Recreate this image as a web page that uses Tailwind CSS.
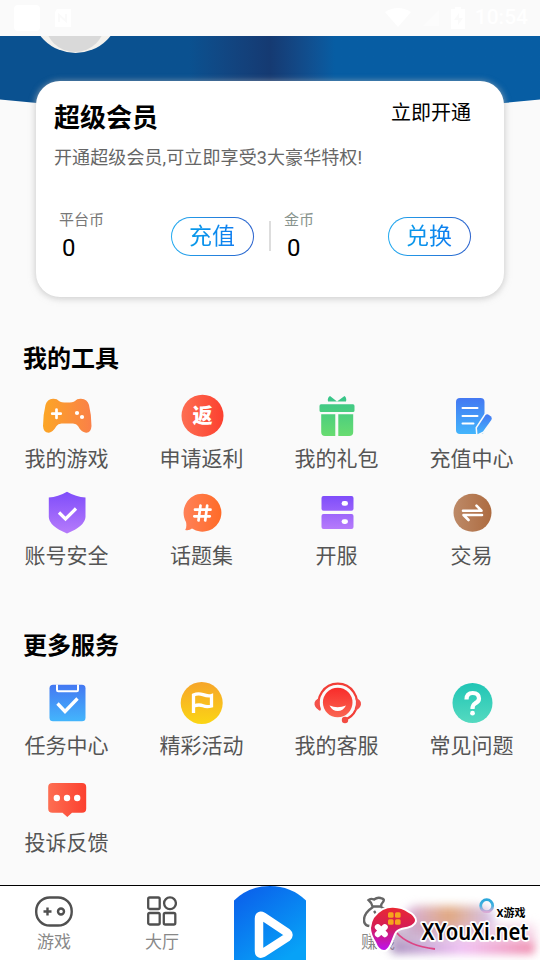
<!DOCTYPE html>
<html lang="zh-CN">
<head>
<meta charset="utf-8">
<title>我的</title>
<script src="https://cdn.jsdelivr.net/npm/@tailwindcss/browser@4"></script>
</head>
<body class="bg-[#fafafa] font-[Roboto,'Noto_Sans_CJK_SC',sans-serif]">
<svg class="absolute size-0" aria-hidden="true">
  <defs>
    <linearGradient id="orange"><stop stop-color="#fca625"/><stop offset="1" stop-color="#fa8048"/></linearGradient>
    <linearGradient id="red"><stop stop-color="#fd6e52"/><stop offset="1" stop-color="#fc402f"/></linearGradient>
    <linearGradient id="green" x2="0" y2="1"><stop stop-color="#36c48a"/><stop offset="1" stop-color="#68dc70"/></linearGradient>
    <linearGradient id="blue" x2="0" y2="1"><stop stop-color="#4478f2"/><stop offset="1" stop-color="#43b5fc"/></linearGradient>
    <linearGradient id="purple" x2="0" y2="1"><stop stop-color="#7f4dfa"/><stop offset="1" stop-color="#b67bfb"/></linearGradient>
    <linearGradient id="coral"><stop stop-color="#ff8158"/><stop offset="1" stop-color="#ff6b28"/></linearGradient>
    <linearGradient id="brown"><stop stop-color="#bd8a68"/><stop offset="1" stop-color="#ad6b40"/></linearGradient>
    <linearGradient id="gold" x2="0" y2="1"><stop stop-color="#f6a52a"/><stop offset="1" stop-color="#fbd514"/></linearGradient>
    <linearGradient id="teal" x2="0" y2="1"><stop stop-color="#20c5b5"/><stop offset="1" stop-color="#55dac0"/></linearGradient>
    <linearGradient id="face" x2="0" y2="1"><stop stop-color="#f82c2a"/><stop offset="1" stop-color="#fa6552"/></linearGradient>
    <linearGradient id="play" x2=".7" y2="1"><stop stop-color="#0b5bea"/><stop offset="1" stop-color="#07a2f7"/></linearGradient>
    <linearGradient id="pad" x2="0" y2="1"><stop stop-color="#e92833"/><stop offset=".45" stop-color="#d51d55"/><stop offset="1" stop-color="#bd13ee"/></linearGradient>
    <linearGradient id="ring" x2="0" y2="1"><stop stop-color="#2ba6da"/><stop offset=".5" stop-color="#45b2e0"/><stop offset="1" stop-color="#d9a9d5"/></linearGradient>
  </defs>
</svg>
<div class="relative flex h-[960px] w-[540px] flex-col overflow-hidden">
  <div class="relative z-10 flex h-9 shrink-0 items-center bg-[#fafafa] pl-3.5 pr-3 text-white">
    <div class="size-[26px] rounded-sm bg-white"></div>
    <svg class="ml-3.5" width="18" height="20" viewBox="0 0 18 20"><path d="M3 1h14v18H1V4z" fill="#fff"/><path d="M5 14V7l7 6V6" fill="none" stroke="#fafafa" stroke-width="2"/></svg>
    <svg class="ml-auto" width="26" height="20" viewBox="0 0 26 20"><path d="M0 4Q13-4 26 4L13 19z" fill="#fff"/></svg>
    <svg class="ml-2.5" width="20" height="20" viewBox="0 0 20 20"><path d="M18 2v16H2z" fill="#fcfcfc"/></svg>
    <svg class="ml-2.5" width="14" height="22" viewBox="0 0 14 22"><path d="M4 0h6v2h4v20H0V2h4z" fill="#fff"/><path d="M8 6l-5 7h4v5l5-7H8z" fill="#fafafa"/></svg>
    <span class="ml-2.5 text-[21px] font-medium">10:54</span>
  </div>

  <div class="absolute left-0 top-9 h-[70px] w-full overflow-hidden">
    <div class="h-full bg-linear-to-r from-[#0a5190] from-35% via-[#153a72] via-50% to-[#075da3] to-62% [clip-path:path('M0_0H540V63.5Q270_91_0_63.5Z')]"></div>
    <div class="absolute -top-[72px] left-[30.5px] size-[89px] rounded-full bg-[#f3f1ed]"></div>
    <div class="absolute -top-[44px] left-[45px] size-[60px] rounded-full bg-[#d9d9d9]"></div>
  </div>

  <section class="relative mx-9 mt-[45px] h-[216px] shrink-0 rounded-3xl bg-white px-[18px] shadow-[0_1px_6px_1px_rgba(185,185,185,0.65)]">
    <div class="flex items-start justify-between pr-[15px] pt-[17px]">
      <h1 class="text-[26px] font-bold leading-10">超级会员</h1>
      <span class="text-[20px] leading-[30px]">立即开通</span>
    </div>
    <p class="mt-1.5 text-[18px] leading-7 tracking-[0.1px] text-[#666]">开通超级会员,可立即享受3大豪华特权!</p>
    <div class="mt-[34px] flex h-[60px] items-center">
      <div class="flex w-[117px] flex-col pl-[5px]">
        <span class="text-[15px] leading-6 text-[#777]">平台币</span>
        <span class="pl-[3px] text-[24px] leading-8">0</span>
      </div>
      <div class="flex h-[39px] w-[83px] items-center justify-center rounded-full bg-linear-to-r from-[#20aaf0] to-[#2860cc] p-px">
        <div class="flex size-full items-center justify-center rounded-full bg-white"><span class="bg-linear-to-r from-[#0a9be9] to-[#117cf0] bg-clip-text pr-px pt-px text-[23px] leading-[36px] text-transparent">充值</span></div>
      </div>
      <div class="ml-[15px] h-[30px] w-0.5 bg-[#ddd]"></div>
      <div class="ml-[13px] flex w-[104px] flex-col">
        <span class="text-[15px] leading-6 text-[#87938d]">金币</span>
        <span class="pl-[3px] text-[24px] leading-8">0</span>
      </div>
      <div class="flex h-[39px] w-[83px] items-center justify-center rounded-full bg-linear-to-r from-[#20aaf0] to-[#2860cc] p-px">
        <div class="flex size-full items-center justify-center rounded-full bg-white"><span class="bg-linear-to-r from-[#0a9be9] to-[#117cf0] bg-clip-text pr-px pt-px text-[23px] leading-[36px] text-transparent">兑换</span></div>
      </div>
    </div>
  </section>

  <section class="mt-[44px] h-[247px] shrink-0 text-[#555]">
    <h2 class="pl-[23px] text-[24px] font-bold leading-9 text-black">我的工具</h2>
    <div class="-ml-px mt-[15px] mr-px grid auto-rows-[97px] grid-cols-4 text-[21px] leading-[30px]">
      <div class="flex flex-col items-center gap-1">
        <svg class="size-12 overflow-visible" viewBox="0 0 48 48"><path d="M10 6.700Q14 6.500 16 9Q18 10.500 24 10.500T32 9Q34 6.500 38 6.700Q44.500 7 46 13Q48.500 23 48.500 34Q48 41 43 40.700Q38 40 35 34Q33.500 31.500 30 31.500H18.500Q15 31.500 13.500 34Q10 40 6 40.700Q.5 41 0 34Q0 23 2.500 13Q4 7 10 6.700Z" fill="url(#orange)"/><path d="M13.500 17.500v8.500M9.200 21.700h8.500" stroke="#fff" stroke-width="2.700" stroke-linecap="round"/><circle cx="34" cy="21" r="2.100" fill="#fff"/><circle cx="39" cy="25" r="2.100" fill="#fff"/></svg>
        <span>我的游戏</span>
      </div>
      <div class="flex flex-col items-center gap-1">
        <svg class="size-12" viewBox="0 0 48 48"><circle cx="24.500" cy="23.700" r="21" fill="url(#red)"/><text x="24.500" y="31" text-anchor="middle" font-size="20" font-weight="900" fill="#fff">返</text></svg>
        <span>申请返利</span>
      </div>
      <div class="flex flex-col items-center gap-1">
        <svg class="size-12" viewBox="0 0 48 48"><path d="M17 4L24 9.500L31.500 4Q34 6 33 9.500H15Q14 6 17 4ZM8 12.300H40Q41.500 12.300 41.500 14V18.500Q41.500 20 40 20H8Q6.500 20 6.500 18.500V14Q6.500 12.300 8 12.300ZM8.200 22.300H22.300V44H12Q8.200 44 8.200 40ZM25.300 22.300H40.200V40Q40.200 44 36.200 44H25.300Z" fill="url(#green)"/></svg>
        <span>我的礼包</span>
      </div>
      <div class="flex flex-col items-center gap-1">
        <svg class="size-12" viewBox="0 0 48 48"><rect x="8" y="6" width="28.500" height="36" rx="4" fill="url(#blue)"/><path d="M14.500 16h15M14.500 24h15M14.500 31.500h11" stroke="#fff" stroke-width="2" stroke-linecap="round"/><path d="M37.500 23Q39 21.500 41 23L43 24.500Q44.500 26 43.300 28L35 39.500L29.500 42.300L29 36Z" fill="url(#blue)" stroke="#fafafa" stroke-width="3" paint-order="stroke"/></svg>
        <span>充值中心</span>
      </div>
      <div class="flex flex-col items-center gap-1">
        <svg class="size-12" viewBox="0 0 48 48"><path d="M24 2.700Q33 8 42.500 8.500V28Q42 37 24 44.500Q6 37 5.800 28V8.500Q15 8 24 2.700Z" fill="url(#purple)"/><path d="M16 23.500l6.500 6.500L33 19.500" fill="none" stroke="#fff" stroke-width="3.200"/></svg>
        <span>账号安全</span>
      </div>
      <div class="flex flex-col items-center gap-1">
        <svg class="size-12" viewBox="0 0 48 48"><path d="M24.500 4.700A19 19 0 1 1 14 39.600Q11 42 7.200 41Q9 38.500 8 33A19 19 0 0 1 24.500 4.700Z" fill="url(#coral)"/><path d="M22.500 16.500l-2 15M29.200 16.500l-2 15M17 20.700h15.500M16.300 27.300h15.500" stroke="#fff" stroke-width="2.700" stroke-linecap="round"/></svg>
        <span>话题集</span>
      </div>
      <div class="flex flex-col items-center gap-1">
        <svg class="size-12" viewBox="0 0 48 48"><path d="M10.500 7h28q2 0 2 2v10.700q0 2-2 2h-28q-2 0-2-2V9q0-2 2-2zM10.500 25h28q2 0 2 2v11q0 2-2 2h-28q-2 0-2-2v-11q0-2 2-2z" fill="url(#purple)"/><rect x="28.600" y="12" width="6.400" height="4.800" rx="2.400" fill="#fff"/><rect x="28.600" y="30.200" width="6.400" height="4.800" rx="2.400" fill="#fff"/></svg>
        <span>开服</span>
      </div>
      <div class="flex flex-col items-center gap-1">
        <svg class="size-12" viewBox="0 0 48 48"><circle cx="24.500" cy="23.700" r="19" fill="url(#brown)"/><path d="M15 21.700H33.500L28.500 16.700M34 26H15.500L20.500 31" fill="none" stroke="#fff" stroke-width="2.600" stroke-linejoin="round" stroke-linecap="round"/></svg>
        <span>交易</span>
      </div>
    </div>
  </section>

  <section class="mt-10 shrink-0 text-[#555]">
    <h2 class="pl-[23px] text-[24px] font-bold leading-9 text-black">更多服务</h2>
    <div class="-ml-px mt-[15px] mr-px grid auto-rows-[97px] grid-cols-4 text-[21px] leading-[30px]">
      <div class="flex flex-col items-center gap-1">
        <svg class="size-12" viewBox="0 0 48 48"><rect x="6.500" y="5.700" width="36" height="36.500" rx="3.500" fill="url(#blue)"/><path d="M14 5.500V11q0 1.200 1.200 1.200H33.800q1.200 0 1.200-1.200V5.500" fill="none" stroke="#fff" stroke-width="2"/><path d="M14.500 24.500l7.500 8L34.500 19.500" fill="none" stroke="#fff" stroke-width="3.300"/></svg>
        <span>任务中心</span>
      </div>
      <div class="flex flex-col items-center gap-1">
        <svg class="size-12" viewBox="0 0 48 48"><circle cx="23.700" cy="24" r="21" fill="url(#gold)"/><path d="M15.500 34V16Q20 13.800 25 15.600T33.500 16.500V27Q29 28.500 25 26.800T16 27" fill="none" stroke="#fff" stroke-width="3.300"/></svg>
        <span>精彩活动</span>
      </div>
      <div class="flex flex-col items-center gap-1">
        <svg class="size-12 overflow-visible" viewBox="0 0 48 48"><circle cx="24.700" cy="23.500" r="14.800" fill="url(#face)"/><path d="M7 31A19.200 19.200 0 1 1 42.600 31Q39.500 38 32 40.500" fill="none" stroke="#f23e37" stroke-width="2.200"/><path d="M7 19Q1 20.500 1.500 25.500Q2 29 7.500 32Q5.500 25 7 19ZM42.500 19Q48.500 20.500 48 25.500Q47.500 29 42 32Q44 25 42.500 19Z" fill="#f4514a"/><circle cx="32" cy="41" r="3.200" fill="#f34b42"/><path d="M16.500 26.500Q24.500 30 33 26.500Q30 32 24.700 32T16.500 26.500Z" fill="#fff"/></svg>
        <span>我的客服</span>
      </div>
      <div class="flex flex-col items-center gap-1">
        <svg class="size-12" viewBox="0 0 48 48"><circle cx="24.500" cy="24" r="20" fill="url(#teal)"/><path d="M18.500 20.500Q18.500 14 24.700 14T31 19.500Q31 22.500 27 24.500Q24.500 26 24.500 30" fill="none" stroke="#fff" stroke-width="4.200"/><circle cx="24.500" cy="34.200" r="2.400" fill="#fff"/></svg>
        <span>常见问题</span>
      </div>
      <div class="flex flex-col items-center gap-1">
        <svg class="size-12" viewBox="0 0 48 48"><path d="M9.500 7H39q4.200 0 4.200 4V32.700q0 4-4.200 4H29L24.300 41L19.500 36.700H9.500q-4.300 0-4.300-4V11q0-4 4.300-4Z" fill="url(#red)"/><circle cx="13.800" cy="22" r="3.200" fill="#fff"/><circle cx="24" cy="22" r="3.200" fill="#fff"/><circle cx="34.200" cy="22" r="3.200" fill="#fff"/></svg>
        <span>投诉反馈</span>
      </div>
    </div>
  </section>

  <nav class="absolute bottom-0 left-0 grid h-[75px] w-full grid-cols-5 border-t border-black bg-white text-[17px] leading-6 text-[#888]">
    <div class="flex flex-col items-center pt-[7px]">
      <svg width="38" height="37" viewBox="0 0 38 37" fill="none" stroke="#505050" stroke-width="2.400"><rect x="1.200" y="4.500" width="35.500" height="28" rx="13.500"/><path d="M12.500 14.500v8M8.500 18.500h8"/><circle cx="26" cy="18.500" r="3"/></svg>
      <span>游戏</span>
    </div>
    <div class="flex flex-col items-center pt-[7px]">
      <svg width="30" height="37" viewBox="0 0 30 37" fill="none" stroke="#505050" stroke-width="2.300"><rect x="1.200" y="4.500" width="11.500" height="11.500" rx="1.500"/><circle cx="23" cy="10.300" r="5.900"/><rect x="1.200" y="20" width="11.500" height="11.500" rx="1.500"/><rect x="16.800" y="20" width="11.500" height="11.500" rx="1.500"/></svg>
      <span>大厅</span>
    </div>
    <div class="flex justify-center">
      <svg width="72" height="74" viewBox="0 0 72 74"><path d="M0 14.500Q15 0 36 0T72 14.500V74H0Z" fill="url(#play)"/><path d="M25 32.500Q25 28.500 29 30.500L53 46.500Q56 49 53 51.500L29 67Q25 69 25 65Z" fill="none" stroke="#fff" stroke-width="8.500" stroke-linejoin="round"/></svg>
    </div>
    <div class="flex flex-col items-center pt-[7px]">
      <svg width="30" height="37" viewBox="0 0 30 37" fill="none" stroke="#666" stroke-width="2.400"><path d="M9.500 13.500Q9 10 5.500 7Q7.500 5 11 6.500Q15 3.500 19 5.500Q22 6 20 9Q18 11 18 13.500ZM10 14Q1 20 1 27Q1 33 7 33H23Q29 31 27 23Q25 17 18 14M11 18l3 4l4-4M14 22v6"/></svg>
      <span>赚钱</span>
    </div>
    <div></div>
    <div class="absolute left-[364px] top-2 h-[66px] w-[176px] overflow-hidden">
      <div class="absolute left-10 top-3 h-7 w-[90px] rounded-full bg-linear-to-r from-[#c58dd5]/70 via-[#dfa070]/90 to-[#b99be5]/60 blur-[5px]"></div>
      <div class="absolute left-6 top-8 h-5 w-[146px] bg-linear-to-r from-[#9b7ba5]/60 via-[#dfb7de]/70 to-[#efb0d0]/70 blur-[6px]"></div>
      <div class="absolute left-7 top-12 h-3 w-[142px] bg-linear-to-r from-[#8c6eaa]/70 via-[#eeb3f3]/80 to-[#ed80a4]/90 blur-[4px]"></div>
      <svg class="absolute left-0 top-0" width="176" height="66" viewBox="0 0 176 66">
        <circle cx="122.700" cy="11.700" r="6" fill="none" stroke="url(#ring)" stroke-width="2.800"/>
        <path d="M32 38Q44 52 71 55" fill="none" stroke="#dc4585" stroke-width="1.800"/>
        <path d="M19 16Q24 13.500 29 13.700Q38 14 44 18.500Q51 22 51 27Q50 32 38 33.700Q32 35 30 40Q28 45 26 50Q23 56 20 56Q15 56 12 48Q7 40 7 34Q8 22 19 16Z" fill="url(#pad)" stroke="#fff" stroke-width="4" stroke-linejoin="round" paint-order="stroke"/>
        <path d="M13.800 33.200l7 7M20.800 33.200l-7 7" stroke="#fff" stroke-width="6" stroke-linecap="round"/>
        <g fill="#f6a51d"><rect x="24" y="18.200" width="5.600" height="5.600" rx="1.500"/><rect x="31" y="18.200" width="5.600" height="5.600" rx="1.500"/><rect x="24" y="25.200" width="5.600" height="5.600" rx="1.500"/><rect x="31" y="25.200" width="5.600" height="5.600" rx="1.500"/></g>
        <g fill="#000" stroke="#fff" stroke-width="3" stroke-linejoin="round" paint-order="stroke" font-weight="700">
          <text x="57.500" y="46" textLength="107" lengthAdjust="spacingAndGlyphs" font-family="Noto Sans, Open Sans, sans-serif" font-size="23.500" font-weight="600" stroke-width="3.500">XYouXi.net</text>
          <text x="132.500" y="22.500" font-size="11" textLength="29" lengthAdjust="spacingAndGlyphs">X游戏</text>
        </g>
      </svg>
    </div>
  </nav>
</div>
</body>
</html>
